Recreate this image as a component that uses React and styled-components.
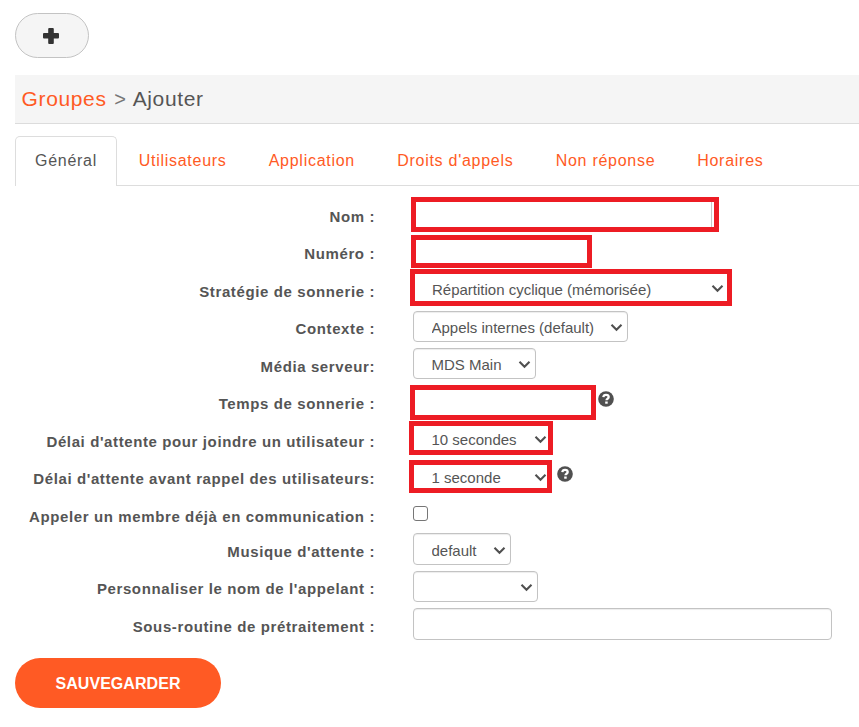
import React from "react";
import styled, { createGlobalStyle, css } from "styled-components";

const GlobalStyle = createGlobalStyle`
  * { box-sizing: border-box; }
  body { margin: 0; background: #fff; overflow: hidden; }
`;

const Page = styled.main`
  width: 859px;
  height: 727px;
  padding: 13px 0 0 15px;
  display: flex;
  flex-direction: column;
  align-items: flex-start;
  font-family: "Liberation Sans", Arial, sans-serif;
  color: #555;
`;

const AddButton = styled.button`
  width: 74px;
  height: 45px;
  padding: 0 2px 0 0;
  display: flex;
  align-items: center;
  justify-content: center;
  border: 1px solid #c3c3c3;
  border-radius: 23px;
  background: #f5f5f5;
`;

const Breadcrumb = styled.h1`
  width: 100%;
  height: 49px;
  margin: 17px 0 0;
  padding: 0 0 0 6.5px;
  border-bottom: 1px solid #dcdcdc;
  background: #f5f5f5;
  font-size: 21px;
  font-weight: 400;
  line-height: 47px;
  letter-spacing: 0.65px;
  white-space: pre;
`;

const Crumb = styled.a`
  color: #ff5a24;
`;

const Separator = styled.span`
  margin: 0 6px 0 7.7px;
  color: #777;
  font-size: 20px;
`;

const TabBar = styled.nav`
  width: 100%;
  height: 50px;
  margin-top: 12px;
  display: flex;
  box-shadow: inset 0 -1px #ddd;
`;

const Tab = styled.a`
  height: 50px;
  width: ${(p) => p.$width}px;
  padding-left: ${(p) => (p.$active ? 19 : 21.7)}px;
  font-size: 16px;
  line-height: 49px;
  letter-spacing: 0.73px;
  white-space: nowrap;
  color: #ff5a24;
  ${(p) =>
    p.$active &&
    css`
      border: 1px solid #ddd;
      border-bottom: 0;
      border-radius: 5px 5px 0 0;
      background: #fff;
      color: #555;
      line-height: 47px;
    `}
`;

const Form = styled.form`
  margin-top: 11px;
  display: flex;
  flex-direction: column;
`;

const Row = styled.div`
  height: ${(p) => p.$height}px;
  display: flex;
  align-items: flex-start;
`;

const Label = styled.label`
  width: 360px;
  margin-right: 34px;
  font-size: 15px;
  font-weight: 700;
  line-height: 39px;
  letter-spacing: 0.61px;
  text-align: right;
  white-space: nowrap;
`;

const control = css`
  width: ${(p) => p.$w}px;
  height: ${(p) => p.$h}px;
  border: 1px solid #c3c3c3;
  border-radius: 4px;
  background: #fff;
  box-shadow: inset 0 1px 1px rgba(0, 0, 0, 0.075);
  ${(p) =>
    p.$required &&
    css`
      border: 5px solid #ed1c24;
      border-radius: 0;
      box-shadow: none;
    `}
`;

const Field = styled.div`
  display: flex;
  gap: ${(p) => p.$gap ?? 3}px;
  margin: ${(p) => p.$top}px 0 0 ${(p) => p.$left}px;
`;

const Input = styled.input`
  ${control}
  padding: 0 8px;
  font: 15px "Liberation Sans", Arial, sans-serif;
  outline: 0;
`;

const InputFrame = styled.div`
  ${control}
  padding-right: 2px;
  display: flex;
`;

const InnerInput = styled.input`
  flex: 1;
  min-width: 0;
  border: 0;
  border-right: 1px solid #c8c8c8;
  outline: 0;
`;

const SelectFrame = styled.div`
  ${control}
  display: grid;
  align-items: center;
  > * { grid-area: 1 / 1; }
`;

const Select = styled.select`
  appearance: none;
  width: 100%;
  height: 20px;
  margin: ${(p) => p.$shift ?? 2}px 0 0;
  padding: 0 0 0 ${(p) => p.$inset}px;
  border: 0;
  outline: 0;
  background: transparent;
  color: #555;
  font: 15px "Liberation Sans", Arial, sans-serif;
`;

const Chevron = styled.svg`
  justify-self: end;
  margin: 2px ${(p) => p.$right}px 0 0;
  pointer-events: none;
`;

const HelpIcon = styled.svg`
  flex: none;
  margin-top: 6px;
`;

const Checkbox = styled.input`
  appearance: none;
  width: 15px;
  height: 15px;
  margin: 0;
  border: 1px solid #767676;
  border-radius: 3px;
  background: #fff;
`;

const SaveButton = styled.button`
  width: 206px;
  height: 50px;
  margin-top: 13px;
  padding: 2px 0 0;
  border: 0;
  border-radius: 25px;
  background: #ff5a24;
  color: #fff;
  font: 700 16px "Liberation Sans", Arial, sans-serif;
  letter-spacing: 0.05px;
`;

const tabs = [
  ["Général", 102],
  ["Utilisateurs", 130],
  ["Application", 128.5],
  ["Droits d'appels", 158.5],
  ["Non réponse", 141.5],
  ["Horaires", 110],
];

const rows = [
  { label: "Nom :", height: 37, kind: "framed", top: 0, left: 2, w: 308, h: 35 },
  { label: "Numéro :", height: 38, kind: "input", top: 1, left: 2, w: 181, h: 33, required: true },
  { label: "Stratégie de sonnerie :", height: 37, kind: "select", value: "Répartition cyclique (mémorisée)", top: -3, left: 1, w: 322, h: 37, required: true, inset: 17, right: 3.5, shift: 4 },
  { label: "Contexte :", height: 38, kind: "select", value: "Appels internes (default)", top: 2, left: 4, w: 215, h: 31, inset: 17.5, right: 4 },
  { label: "Média serveur:", height: 37, kind: "select", value: "MDS Main", top: 1, left: 4, w: 123, h: 31, inset: 17.5, right: 4 },
  { label: "Temps de sonnerie :", height: 38, kind: "input", top: 1, left: 1, w: 186, h: 35, required: true, help: true, gap: 2 },
  { label: "Délai d'attente pour joindre un utilisateur :", height: 37, kind: "select", value: "10 secondes", top: -1, left: 0, w: 144, h: 34, required: true, inset: 17.5, right: 1 },
  { label: "Délai d'attente avant rappel des utilisateurs:", height: 38, kind: "select", value: "1 seconde", top: 1, left: 0, w: 143, h: 33, required: true, inset: 17.5, right: 0, help: true, gap: 5 },
  { label: "Appeler un membre déjà en communication :", height: 35, kind: "check", top: 9, left: 4 },
  { label: "Musique d'attente :", height: 37, kind: "select", value: "default", top: 1, left: 4, w: 98, h: 32, inset: 17.5, right: 4 },
  { label: "Personnaliser le nom de l'appelant :", height: 38, kind: "select", value: "", top: 2, left: 4, w: 125, h: 31, inset: 17.5, right: 4 },
  { label: "Sous-routine de prétraitement :", height: 38, kind: "input", top: 1, left: 4, w: 419, h: 32 },
];

function Help() {
  return (
    <HelpIcon width="16" height="16" viewBox="0 0 16 16" aria-label="Aide">
      <circle cx="8" cy="8" r="7.8" fill="#505050" />
      <path d="M5.3 6.2C5.5 4.5 6.6 3.8 8 3.8c1.5 0 2.7.9 2.7 2.2 0 1.8-2.2 1.6-2.2 3.2" fill="none" stroke="#fff" strokeWidth="2.3" />
      <rect x="7.2" y="10.5" width="2.5" height="2.2" fill="#fff" />
    </HelpIcon>
  );
}

function Control({ row }) {
  const size = { $w: row.w, $h: row.h, $required: row.required };
  if (row.kind === "framed")
    return (
      <InputFrame {...size} $required>
        <InnerInput id={row.label} />
      </InputFrame>
    );
  if (row.kind === "input") return <Input id={row.label} {...size} />;
  if (row.kind === "check") return <Checkbox id={row.label} type="checkbox" />;
  return (
    <SelectFrame {...size}>
      <Select id={row.label} $inset={row.inset} $shift={row.shift}>
        <option>{row.value}</option>
      </Select>
      <Chevron $right={row.right} width="13" height="9" viewBox="0 0 13 9">
        <path d="M1.5 1.7 6.5 6.7l5-5" fill="none" stroke="#505050" strokeWidth="2.1" />
      </Chevron>
    </SelectFrame>
  );
}

export default function App() {
  return (
    <>
      <GlobalStyle />
      <Page>
        <AddButton aria-label="Ajouter">
          <svg width="16" height="16" viewBox="0 0 16 16" fill="#333">
            <rect x="0" y="5" width="16" height="5.6" rx="1" />
            <rect x="5.2" y="0" width="5.6" height="16" rx="1" />
          </svg>
        </AddButton>
        <Breadcrumb>
          <Crumb>Groupes</Crumb>
          <Separator>&gt;</Separator>
          <span>Ajouter</span>
        </Breadcrumb>
        <TabBar>
          {tabs.map(([name, width], i) => (
            <Tab key={name} $width={width} $active={i === 0}>{name}</Tab>
          ))}
        </TabBar>
        <Form>
          {rows.map((row) => (
            <Row key={row.label} $height={row.height}>
              <Label htmlFor={row.label}>{row.label}</Label>
              <Field $top={row.top} $left={row.left} $gap={row.gap}>
                <Control row={row} />
                {row.help && <Help />}
              </Field>
            </Row>
          ))}
        </Form>
        <SaveButton type="button">SAUVEGARDER</SaveButton>
      </Page>
    </>
  );
}
